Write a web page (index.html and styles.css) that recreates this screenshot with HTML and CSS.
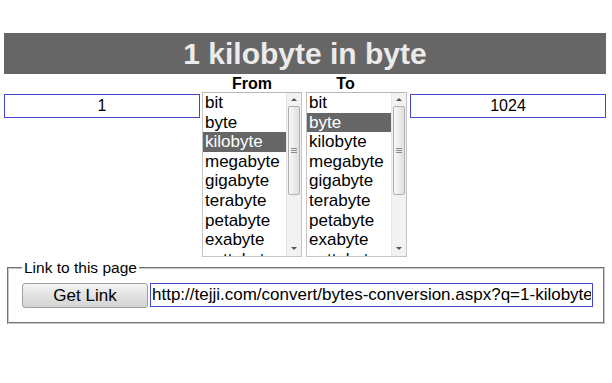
FILE: index.html
```html
<!DOCTYPE html>
<html lang="en">

<head>
    <meta charset="UTF-8">
    <meta name="viewport" content="width=device-width, initial-scale=1.0">
    <title>1 kilobyte in byte</title>
    <link rel="stylesheet" href="styles.css">
</head>

<body>
    <h1 class="title">1 kilobyte in byte</h1>

    <div class="converter">
        <!-- Amount from -->
        <input type="text" class="amount" value="1">

        <!-- From unit -->
        <div class="unit-col">
            <div class="unit-label">From</div>
            <div class="unit-list">
                <div class="unit-options">
                    <div class="unit-option">bit</div>
                    <div class="unit-option">byte</div>
                    <div class="unit-option selected">kilobyte</div>
                    <div class="unit-option">megabyte</div>
                    <div class="unit-option">gigabyte</div>
                    <div class="unit-option">terabyte</div>
                    <div class="unit-option">petabyte</div>
                    <div class="unit-option">exabyte</div>
                    <div class="unit-option">zettabyte</div>
                </div>
                <div class="scrollbar">
                    <div class="scroll-btn up"></div>
                    <div class="scroll-thumb"><span class="grip"></span></div>
                    <div class="scroll-track"></div>
                    <div class="scroll-btn down"></div>
                </div>
            </div>
        </div>

        <!-- To unit -->
        <div class="unit-col to-col">
            <div class="unit-label to-label">To</div>
            <div class="unit-list">
                <div class="unit-options">
                    <div class="unit-option">bit</div>
                    <div class="unit-option selected">byte</div>
                    <div class="unit-option">kilobyte</div>
                    <div class="unit-option">megabyte</div>
                    <div class="unit-option">gigabyte</div>
                    <div class="unit-option">terabyte</div>
                    <div class="unit-option">petabyte</div>
                    <div class="unit-option">exabyte</div>
                    <div class="unit-option">zettabyte</div>
                </div>
                <div class="scrollbar">
                    <div class="scroll-btn up"></div>
                    <div class="scroll-thumb"><span class="grip"></span></div>
                    <div class="scroll-track"></div>
                    <div class="scroll-btn down"></div>
                </div>
            </div>
        </div>

        <!-- Amount to -->
        <input type="text" class="amount result" value="1024">
    </div>

    <fieldset class="link-box">
        <legend>Link to this page</legend>
        <div class="link-row">
            <button type="button" class="get-link">Get Link</button>
            <input type="text" class="link-url" value="http://tejji.com/convert/bytes-conversion.aspx?q=1-kilobyte">
        </div>
    </fieldset>
</body>

</html>
```

FILE: styles.css
```css
body {
    margin: 0;
    padding: 33px 6px 0 4px;
    font-family: "Liberation Sans", Arial, sans-serif;
    background-color: #fff;
    color: #000;
}

.title {
    margin: 0;
    height: 41px;
    line-height: 41px;
    background-color: #666;
    color: #ebebeb;
    font-size: 30px;
    font-weight: bold;
    text-align: center;
}

.converter {
    display: flex;
    align-items: flex-start;
}

.amount {
    box-sizing: border-box;
    width: 196px;
    height: 24px;
    margin-top: 20px;
    padding: 0 2px;
    border: 1px solid #4444cc;
    font-family: "Liberation Sans", Arial, sans-serif;
    font-size: 16px;
    text-align: center;
    color: #000;
    outline: none;
}

.amount.result {
    margin-left: 3px;
}

.unit-col {
    width: 101px;
    margin-left: 2px;
}

.to-col {
    margin-left: 4px;
    width: 102px;
}

.unit-label {
    height: 18px;
    line-height: 20px;
    font-size: 16px;
    font-weight: bold;
    text-align: center;
}

.to-label {
    padding-right: 22px;
}

.unit-list {
    display: flex;
    box-sizing: border-box;
    height: 165px;
    border: 1px solid #c4c4c4;
    border-top-color: #b8b8b8;
    overflow: hidden;
}

.unit-options {
    flex: 1;
    overflow: hidden;
}

.unit-option {
    height: 19.6px;
    line-height: 19.6px;
    padding-left: 2px;
    font-size: 17px;
    white-space: nowrap;
}

.unit-option.selected {
    background-color: #666;
    color: #fff;
}

/* fake scrollbar so it looks the same everywhere */
.scrollbar {
    display: flex;
    flex-direction: column;
    width: 14px;
    background-color: #f2f2f2;
    border-left: 1px solid #e6e6e6;
}

.scroll-btn {
    height: 13px;
    display: flex;
    align-items: center;
    justify-content: center;
}

.scroll-btn::before {
    content: "";
    border-left: 3px solid transparent;
    border-right: 3px solid transparent;
}

.scroll-btn.up::before {
    border-bottom: 3px solid #555;
}

.scroll-btn.down {
    height: 16px;
}

.scroll-btn.down::before {
    border-top: 3px solid #555;
}

.scroll-thumb {
    box-sizing: border-box;
    height: 89px;
    margin: 0 1px;
    border: 1px solid #b0b0b0;
    border-radius: 2px;
    background: linear-gradient(to right, #f8f8f8, #e0e0e0);
    display: flex;
    align-items: center;
    justify-content: center;
}

.grip {
    width: 6px;
    height: 5px;
    background: repeating-linear-gradient(to bottom, #8a8a8a 0, #8a8a8a 1px, transparent 1px, transparent 2px);
}

.scroll-track {
    flex: 1;
}

.link-box {
    margin: 2px 3px 0 3px;
    padding: 6px 10px 14px 13px;
    border: 2px groove #c8c8c8;
}

.link-box legend {
    margin-left: 0;
    padding: 0 2px;
    font-size: 15.5px;
    color: #000;
}

.link-row {
    display: flex;
    align-items: flex-start;
}

.get-link {
    box-sizing: border-box;
    width: 126px;
    height: 25px;
    border: 1px solid #a0a0a0;
    border-radius: 3px;
    background: linear-gradient(to bottom, #f4f4f4, #e2e2e2 50%, #d4d4d4);
    font-family: "Liberation Sans", Arial, sans-serif;
    font-size: 17px;
    color: #000;
    padding: 0;
}

.link-url {
    box-sizing: border-box;
    width: 443px;
    height: 24px;
    margin-left: 2px;
    padding: 0 1px;
    border: 1px solid #4444cc;
    font-family: "Liberation Sans", Arial, sans-serif;
    font-size: 17px;
    color: #000;
    outline: none;
}
```
